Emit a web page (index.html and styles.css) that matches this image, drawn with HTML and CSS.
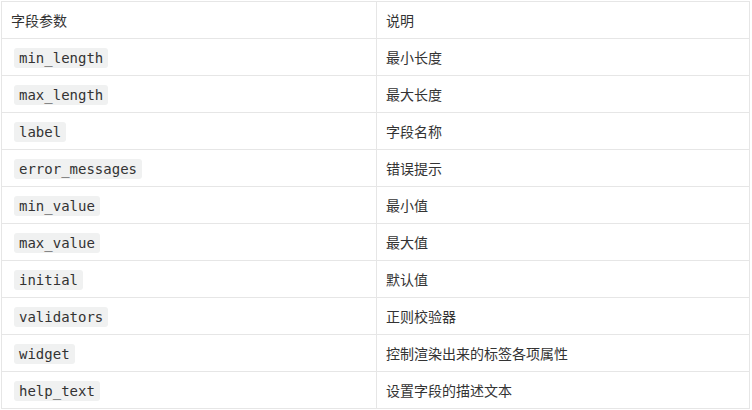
FILE: index.html
```html
<!DOCTYPE html>
<html lang="zh">
<head>
<meta charset="utf-8">
<link rel="stylesheet" href="styles.css">
</head>
<body>
<table class="params">
  <colgroup><col class="c1"><col class="c2"></colgroup>
  <thead>
    <tr><th>字段参数</th><th>说明</th></tr>
  </thead>
  <tbody>
    <tr><td><code>min_length</code></td><td>最小长度</td></tr>
    <tr><td><code>max_length</code></td><td>最大长度</td></tr>
    <tr><td><code>label</code></td><td>字段名称</td></tr>
    <tr><td><code>error_messages</code></td><td>错误提示</td></tr>
    <tr><td><code>min_value</code></td><td>最小值</td></tr>
    <tr><td><code>max_value</code></td><td>最大值</td></tr>
    <tr><td><code>initial</code></td><td>默认值</td></tr>
    <tr><td><code>validators</code></td><td>正则校验器</td></tr>
    <tr><td><code>widget</code></td><td>控制渲染出来的标签各项属性</td></tr>
    <tr><td><code>help_text</code></td><td>设置字段的描述文本</td></tr>
  </tbody>
</table>
</body>
</html>
```

FILE: styles.css
```css
html, body {
  margin: 0;
  padding: 0;
  background: #ffffff;
}
body {
  padding: 1px 0 0 1px;
  font-family: "Noto Sans CJK SC", "Noto Sans", sans-serif;
  font-size: 14px;
  color: #333333;
}
.params {
  border-collapse: collapse;
  width: 749px;
  table-layout: fixed;
}
.c1 { width: 375px; }
.params tr {
  height: 37px;
}
.params th,
.params td {
  border: 1px solid #e6e6e6;
  padding: 0 9px;
  text-align: left;
  font-weight: normal;
  vertical-align: middle;
  line-height: 20px;
}
.params code {
  display: inline-block;
  margin-left: 3px;
  padding: 0 5px;
  background: #f0f1f1;
  border-radius: 3px;
  font-family: "DejaVu Sans Mono", monospace;
  font-size: 14px;
  line-height: 20px;
  color: #333333;
}
```
